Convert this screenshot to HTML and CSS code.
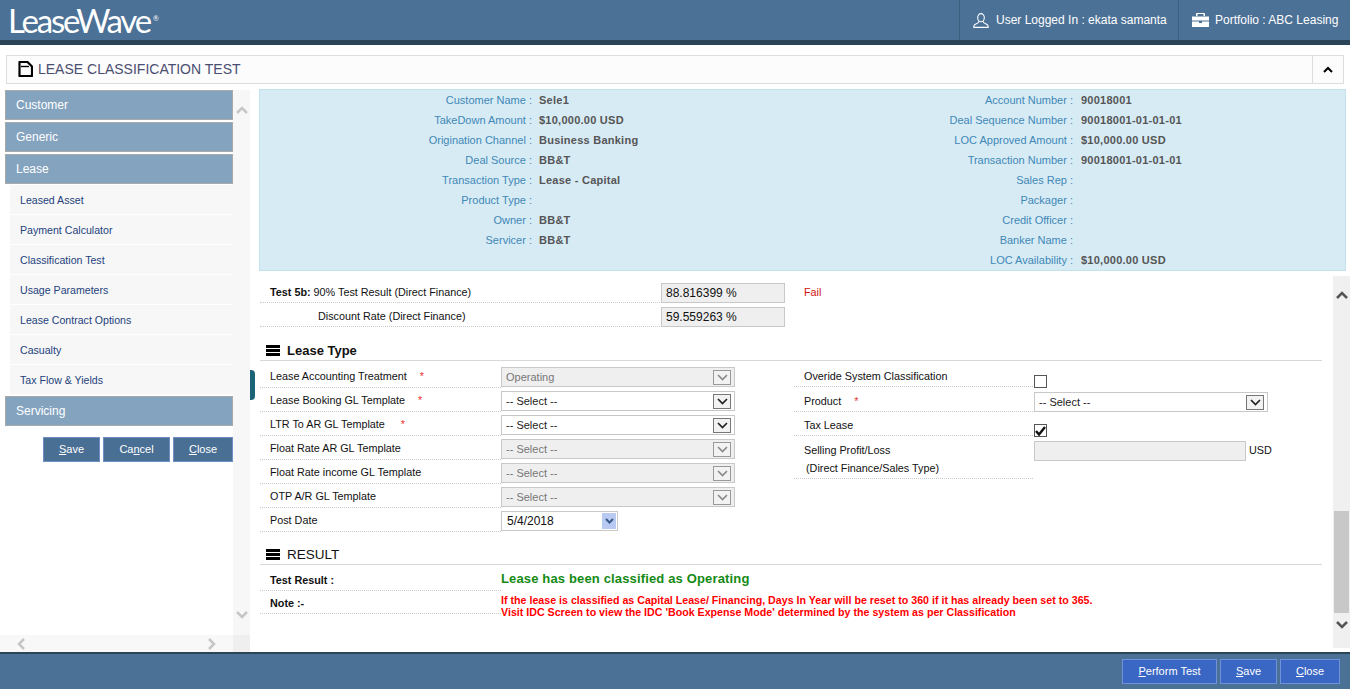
FILE: index.html
```html
<!DOCTYPE html>
<html lang="en">
<head>
    <meta charset="UTF-8">
    <title>Lease Classification Test</title>
    <link rel="stylesheet" href="styles.css">
</head>
<body>

    <header class="topbar">
        <div class="logo">LeaseWave<sup>®</sup></div>
        <div class="topbar-item topbar-user">
            <svg class="topbar-icon" width="16" height="15" viewBox="0 0 16 15" fill="none" stroke="#fff" stroke-width="1.1"><ellipse cx="8" cy="4.700" rx="3.300" ry="4.100"/><path d="M6 8.200 C5.800 10 4.500 10.300 2.800 11 C1.300 11.600 .6 12.800 .8 14.400 L15.200 14.400 C15.400 12.800 14.700 11.600 13.200 11 C11.500 10.300 10.200 10 10 8.200"/></svg>
            User Logged In : ekata samanta
        </div>
        <div class="topbar-item topbar-portfolio">
            <svg class="topbar-icon" width="17" height="14" viewBox="0 0 17 14" fill="#fff"><path d="M5.500 3V1h6v2h1.500V0.800C13 .3 12.700 0 12.200 0H4.800C4.300 0 4 .3 4 .8V3z"/><path d="M0 3.500h17V7.500H0z"/><path d="M0 8.500h7v1.500h3V8.500h7V14H0z"/></svg>
            Portfolio : ABC Leasing
        </div>
    </header>

    <div class="titlebar">
        <div class="titlebar-name">
            <svg width="15" height="16" viewBox="0 0 15 16" fill="none" stroke="#000" stroke-width="2.200"><path d="M1.500 1h8l4.500 4.500V15H1.500z" stroke-linejoin="round"/><path d="M3 5.500h8" stroke-width="1.400"/></svg>
            LEASE CLASSIFICATION TEST
        </div>
        <div class="titlebar-toggle">
            <svg width="10" height="7" viewBox="0 0 10 7" fill="none" stroke="#000" stroke-width="2"><path d="M1 6l4-4 4 4"/></svg>
        </div>
    </div>

    <div class="page">
        <aside class="sidebar">
            <div class="sidebar-top">
                <nav class="menu">
                    <div class="menu-head">Customer</div>
                    <div class="menu-head">Generic</div>
                    <div class="menu-head">Lease</div>
                    <ul class="submenu">
                        <li>Leased Asset</li>
                        <li>Payment Calculator</li>
                        <li>Classification Test</li>
                        <li>Usage Parameters</li>
                        <li>Lease Contract Options</li>
                        <li>Casualty</li>
                        <li>Tax Flow &amp; Yields</li>
                    </ul>
                    <div class="menu-head">Servicing</div>
                    <div class="menu-buttons">
                        <button class="btn btn-save"><u>S</u>ave</button>
                        <button class="btn btn-cancel">Ca<u>n</u>cel</button>
                        <button class="btn btn-close"><u>C</u>lose</button>
                    </div>
                </nav>
                <div class="side-scroll">
                    <svg width="12" height="8" viewBox="0 0 12 8" fill="none" stroke="#c6c6c6" stroke-width="2.500"><path d="M1 7l5-5 5 5"/></svg>
                    <svg width="12" height="8" viewBox="0 0 12 8" fill="none" stroke="#c6c6c6" stroke-width="2.500"><path d="M1 1l5 5 5-5"/></svg>
                </div>
            </div>
            <div class="sidebar-bottom">
                <div class="hscroll">
                    <svg width="8" height="12" viewBox="0 0 8 12" fill="none" stroke="#c6c6c6" stroke-width="2.500"><path d="M7 1L2 6l5 5"/></svg>
                    <svg width="8" height="12" viewBox="0 0 8 12" fill="none" stroke="#c6c6c6" stroke-width="2.500"><path d="M1 1l5 5-5 5"/></svg>
                </div>
                <div class="corner"></div>
            </div>
        </aside>

        <div class="collapse-tab"></div>

        <main class="main">
            <section class="info">
                <div class="info-col">
                    <div class="info-row"><span class="info-label">Customer Name :</span><span class="info-value">Sele1</span></div>
                    <div class="info-row"><span class="info-label">TakeDown Amount :</span><span class="info-value">$10,000.00 USD</span></div>
                    <div class="info-row"><span class="info-label">Origination Channel :</span><span class="info-value">Business Banking</span></div>
                    <div class="info-row"><span class="info-label">Deal Source :</span><span class="info-value">BB&amp;T</span></div>
                    <div class="info-row"><span class="info-label">Transaction Type :</span><span class="info-value">Lease - Capital</span></div>
                    <div class="info-row"><span class="info-label">Product Type :</span><span class="info-value"></span></div>
                    <div class="info-row"><span class="info-label">Owner :</span><span class="info-value">BB&amp;T</span></div>
                    <div class="info-row"><span class="info-label">Servicer :</span><span class="info-value">BB&amp;T</span></div>
                </div>
                <div class="info-col info-col-right">
                    <div class="info-row"><span class="info-label">Account Number :</span><span class="info-value">90018001</span></div>
                    <div class="info-row"><span class="info-label">Deal Sequence Number :</span><span class="info-value">90018001-01-01-01</span></div>
                    <div class="info-row"><span class="info-label">LOC Approved Amount :</span><span class="info-value">$10,000.00 USD</span></div>
                    <div class="info-row"><span class="info-label">Transaction Number :</span><span class="info-value">90018001-01-01-01</span></div>
                    <div class="info-row"><span class="info-label">Sales Rep :</span><span class="info-value"></span></div>
                    <div class="info-row"><span class="info-label">Packager :</span><span class="info-value"></span></div>
                    <div class="info-row"><span class="info-label">Credit Officer :</span><span class="info-value"></span></div>
                    <div class="info-row"><span class="info-label">Banker Name :</span><span class="info-value"></span></div>
                    <div class="info-row"><span class="info-label">LOC Availability :</span><span class="info-value">$10,000.00 USD</span></div>
                </div>
            </section>

            <div class="form-wrap">
                <div class="form">
                    <div class="test-row">
                        <div class="test-label"><b>Test 5b:</b> 90% Test Result (Direct Finance)</div>
                        <div class="readonly test-value">88.816399 %</div>
                        <div class="fail">Fail</div>
                    </div>
                    <div class="test-row">
                        <div class="test-label test-label-indent">Discount Rate (Direct Finance)</div>
                        <div class="readonly test-value">59.559263 %</div>
                    </div>

                    <h2 class="section-head section-lease">
                        <span class="bars"></span>Lease Type
                    </h2>

                    <div class="columns">
                        <div class="col-left">
                            <div class="field">
                                <div class="field-label">Lease Accounting Treatment<span class="req">*</span></div>
                                <div class="select disabled"><span>Operating</span><i class="arrow"><svg width="11" height="7" viewBox="0 0 11 7" fill="none" stroke="#8a8a8a" stroke-width="1.700"><path d="M1 1l4.500 4.500L10 1"/></svg></i></div>
                            </div>
                            <div class="field">
                                <div class="field-label">Lease Booking GL Template<span class="req">*</span></div>
                                <div class="select"><span>-- Select --</span><i class="arrow"><svg width="11" height="7" viewBox="0 0 11 7" fill="none" stroke="#222" stroke-width="1.700"><path d="M1 1l4.500 4.500L10 1"/></svg></i></div>
                            </div>
                            <div class="field">
                                <div class="field-label">LTR To AR GL Template<span class="req req-wide">*</span></div>
                                <div class="select"><span>-- Select --</span><i class="arrow"><svg width="11" height="7" viewBox="0 0 11 7" fill="none" stroke="#222" stroke-width="1.700"><path d="M1 1l4.500 4.500L10 1"/></svg></i></div>
                            </div>
                            <div class="field">
                                <div class="field-label">Float Rate AR GL Template</div>
                                <div class="select disabled"><span>-- Select --</span><i class="arrow"><svg width="11" height="7" viewBox="0 0 11 7" fill="none" stroke="#8a8a8a" stroke-width="1.700"><path d="M1 1l4.500 4.500L10 1"/></svg></i></div>
                            </div>
                            <div class="field">
                                <div class="field-label">Float Rate income GL Template</div>
                                <div class="select disabled"><span>-- Select --</span><i class="arrow"><svg width="11" height="7" viewBox="0 0 11 7" fill="none" stroke="#8a8a8a" stroke-width="1.700"><path d="M1 1l4.500 4.500L10 1"/></svg></i></div>
                            </div>
                            <div class="field">
                                <div class="field-label">OTP A/R GL Template</div>
                                <div class="select disabled"><span>-- Select --</span><i class="arrow"><svg width="11" height="7" viewBox="0 0 11 7" fill="none" stroke="#8a8a8a" stroke-width="1.700"><path d="M1 1l4.500 4.500L10 1"/></svg></i></div>
                            </div>
                            <div class="field">
                                <div class="field-label">Post Date</div>
                                <div class="date"><span>5/4/2018</span><i class="date-arrow"><svg width="9" height="6" viewBox="0 0 9 6" fill="none" stroke="#3a5a8c" stroke-width="2"><path d="M1 1l3.500 3.500L8 1"/></svg></i></div>
                            </div>
                        </div>

                        <div class="col-right">
                            <div class="rfield rfield-1">
                                <div class="rfield-label">Overide System Classification</div>
                                <div class="check"></div>
                            </div>
                            <div class="rfield rfield-2">
                                <div class="rfield-label">Product<span class="req">*</span></div>
                                <div class="select select-product"><span>-- Select --</span><i class="arrow"><svg width="11" height="7" viewBox="0 0 11 7" fill="none" stroke="#222" stroke-width="1.700"><path d="M1 1l4.500 4.500L10 1"/></svg></i></div>
                            </div>
                            <div class="rfield rfield-3">
                                <div class="rfield-label">Tax Lease</div>
                                <div class="check"><svg width="11" height="10" viewBox="0 0 11 10" fill="none" stroke="#111" stroke-width="2.400"><path d="M1 5l3 3.500L10 1"/></svg></div>
                            </div>
                            <div class="rfield rfield-4">
                                <div class="rfield-label">Selling Profit/Loss<span class="label-second">(Direct Finance/Sales Type)</span></div>
                                <div class="readonly profit"></div>
                                <span class="usd">USD</span>
                            </div>
                        </div>
                    </div>

                    <h2 class="section-head section-result">
                        <span class="bars"></span>RESULT
                    </h2>

                    <div class="result-row result-first">
                        <div class="field-label"><b>Test Result :</b></div>
                        <div class="result-green">Lease has been classified as Operating</div>
                    </div>
                    <div class="result-row result-second">
                        <div class="field-label"><b>Note :-</b></div>
                        <div class="result-red">If the lease is classified as Capital Lease/ Financing, Days In Year will be reset to 360 if it has already been set to 365.<br>Visit IDC Screen to view the IDC 'Book Expense Mode' determined by the system as per Classification</div>
                    </div>
                </div>

                <div class="main-scroll">
                    <svg width="12" height="8" viewBox="0 0 12 8" fill="none" stroke="#555" stroke-width="2.500"><path d="M1 7l5-5 5 5"/></svg>
                    <div class="thumb"></div>
                    <svg width="12" height="8" viewBox="0 0 12 8" fill="none" stroke="#555" stroke-width="2.500"><path d="M1 1l5 5 5-5"/></svg>
                </div>
            </div>
        </main>
    </div>

    <footer class="footer">
        <button class="btn btn-blue btn-perform"><u>P</u>erform Test</button>
        <button class="btn btn-blue btn-foot-save"><u>S</u>ave</button>
        <button class="btn btn-blue btn-foot-close"><u>C</u>lose</button>
    </footer>

</body>
</html>
```

FILE: styles.css
```css
* {
    box-sizing: border-box;
}
html, body {
    margin: 0;
    height: 689px;
    overflow: hidden;
}
body {
    font-family: "Liberation Sans", Arial, sans-serif;
    font-size: 11px;
    color: #222;
    background: #fff;
    display: flex;
    flex-direction: column;
}

/* top bar */
.topbar {
    height: 45px;
    flex: none;
    background: #4c7196;
    border-bottom: 5px solid #2c4458;
    display: flex;
    align-items: stretch;
    color: #fff;
    font-size: 12px;
}
.logo {
    font-family: Lato, "Open Sans", sans-serif;
    font-weight: 400;
    font-size: 33px;
    letter-spacing: -2.200px;
    line-height: 40px;
    padding-left: 8px;
    margin-right: auto;
}
.logo sup {
    font-size: 7px;
    letter-spacing: 0;
    vertical-align: 12px;
    line-height: 0;
    margin-left: 3px;
}
.topbar-item {
    display: flex;
    align-items: center;
    padding-left: 13px;
    border-left: 1px solid #3d5f80;
    white-space: nowrap;
}
.topbar-user {
    width: 219px;
    gap: 7px;
}
.topbar-portfolio {
    width: 172px;
    gap: 6px;
}

/* page title */
.titlebar {
    flex: none;
    height: 29px;
    margin: 10px 6px 6px;
    border: 1px solid #ddd;
    background: #fcfcfc;
    display: flex;
    align-items: center;
    justify-content: space-between;
}
.titlebar-name {
    display: flex;
    align-items: center;
    gap: 5px;
    padding: 0 0 2px 11px;
    font-size: 14px;
    color: #4a4e70;
}
.titlebar-toggle {
    width: 31px;
    height: 100%;
    border-left: 1px solid #ddd;
    display: flex;
    align-items: center;
    justify-content: center;
}

.page {
    flex: 1;
    min-height: 0;
    display: flex;
}

/* left menu */
.sidebar {
    width: 250px;
    flex: none;
    display: flex;
    flex-direction: column;
}
.sidebar-top {
    flex: 1;
    display: flex;
    min-height: 0;
}
.menu {
    width: 233px;
    padding-left: 5px;
}
.menu-head {
    height: 30px;
    margin-bottom: 2px;
    line-height: 28px;
    padding-left: 10px;
    background: #84a3bf;
    border: 1px solid #a9a9a9;
    color: #fff;
    font-size: 12px;
}
.submenu {
    list-style: none;
    margin: -1px 0 0;
    padding: 0;
}
.submenu li {
    height: 30px;
    margin-left: 5px;
    padding-left: 10px;
    line-height: 30px;
    background: #f7f7f7;
    border-bottom: 1px solid #fff;
    color: #24427c;
    font-size: 10.600px;
}
.submenu + .menu-head {
    margin-top: 1px;
}
.menu-buttons {
    display: flex;
    justify-content: flex-end;
    gap: 3px;
    margin-top: 11px;
}
.btn {
    height: 25px;
    padding: 0 0 1px;
    font-family: inherit;
    font-size: 11px;
    color: #fff;
    background: #4a6f94;
    border: 1px solid #6f8fc4;
}
.btn-save {
    width: 57px;
}
.btn-cancel {
    width: 67px;
}
.btn-close {
    width: 60px;
}
.side-scroll {
    width: 17px;
    background: #f7f7f7;
    display: flex;
    flex-direction: column;
    justify-content: space-between;
    align-items: center;
    padding: 16px 0 16px;
}
.sidebar-bottom {
    height: 17px;
    flex: none;
    display: flex;
}
.hscroll {
    width: 233px;
    background: #f8f8f8;
    display: flex;
    justify-content: space-between;
    align-items: center;
    padding: 0 17px;
}
.corner {
    width: 17px;
    background: #efefef;
}

.collapse-tab {
    width: 5px;
    height: 30px;
    flex: none;
    margin: 280px 4px 0 0;
    background: #1b6478;
    border-radius: 0 4px 4px 0;
}

/* customer summary */
.main {
    flex: 1;
    min-width: 0;
    display: flex;
    flex-direction: column;
}
.info {
    flex: none;
    width: 1087px;
    height: 182px;
    margin-top: -1px;
    background: #d7ebf5;
    border: 1px solid #c3e2ee;
    display: flex;
}
.info-col {
    width: 545px;
}
.info-col-right {
    width: auto;
}
.info-row {
    height: 20px;
    display: flex;
    align-items: center;
    font-size: 11px;
    white-space: nowrap;
}
.info-label {
    width: 272px;
    text-align: right;
    color: #3f88b5;
}
.info-value {
    margin-left: 7px;
    font-weight: bold;
    letter-spacing: .25px;
    color: #555;
}
.info-col-right .info-label {
    width: 268px;
}
.info-col-right .info-value {
    margin-left: 8px;
}

/* form area */
.form-wrap {
    flex: none;
    height: 372px;
    margin-top: 5px;
    display: flex;
}
.form {
    width: 1062px;
    margin-left: 1px;
    padding-top: 7px;
    font-size: 10.800px;
    color: #111;
}
.test-row {
    display: flex;
    height: 20px;
    margin-bottom: 4px;
}
.test-label {
    width: 400px;
    height: 20px;
    margin-right: 1px;
    padding-left: 10px;
    line-height: 18px;
    border-bottom: 1px dotted #ccc;
}
.test-label-indent {
    padding-left: 58px;
}
.readonly {
    background: #efefef;
    border: 1px solid #c8c8c8;
}
.test-value {
    width: 124px;
    padding-left: 4px;
    font-size: 12px;
    line-height: 18px;
}
.fail {
    margin-left: 19px;
    color: #d01010;
    line-height: 18px;
}
.section-head {
    display: flex;
    align-items: center;
    margin: 0;
    height: 21px;
    padding-left: 6px;
    border-bottom: 1px solid #d8d8d8;
    font-weight: normal;
    color: #111;
}
.section-lease {
    margin-top: 13px;
    font-size: 13px;
    font-weight: bold;
}
.section-result {
    margin-top: 12px;
    font-size: 13.500px;
}
.bars {
    width: 14px;
    height: 11px;
    margin-right: 7px;
    border-top: 3px solid #000;
    border-bottom: 3px solid #000;
    background: linear-gradient(#000, #000) center / 100% 3px no-repeat;
}
.columns {
    display: flex;
    margin-top: 3px;
}
.col-left {
    width: 534px;
}
.field {
    display: flex;
    height: 24px;
}
.field-label {
    width: 241px;
    height: 24px;
    flex: none;
    padding-left: 10px;
    line-height: 24px;
    border-bottom: 1px dotted #ccc;
}
.req {
    margin-left: 13px;
    color: #e83030;
}
.req-wide {
    margin-left: 16px;
}
.select {
    width: 234px;
    height: 20px;
    margin-top: 3px;
    padding: 0 3px 0 4px;
    display: flex;
    align-items: center;
    justify-content: space-between;
    border: 1px solid #c8c8c8;
    background: #fff;
    font-size: 11px;
    color: #222;
}
.select.disabled {
    background: #efefef;
    color: #777;
}
.arrow {
    width: 18px;
    height: 15px;
    border: 1px solid #777;
    background: #f2f2f2;
    display: flex;
    align-items: center;
    justify-content: center;
}
.disabled .arrow {
    border-color: #999;
}
.date {
    width: 117px;
    height: 20px;
    margin-top: 3px;
    padding-left: 5px;
    display: flex;
    align-items: center;
    justify-content: space-between;
    border: 1px solid #c8c8c8;
    font-size: 12px;
}
.date-arrow {
    width: 14px;
    height: 16px;
    margin-right: 1px;
    background: #b9caf2;
    display: flex;
    align-items: center;
    justify-content: center;
}
.rfield {
    display: flex;
}
.rfield-label {
    width: 239px;
    flex: none;
    margin-right: 1px;
    padding-left: 10px;
    border-bottom: 1px dotted #ccc;
    line-height: 24px;
}
.rfield-1 {
    height: 23px;
}
.rfield-1 .rfield-label {
    height: 23px;
}
.rfield-2 {
    height: 25px;
}
.rfield-2 .rfield-label {
    height: 25px;
    line-height: 28px;
}
.rfield-3 {
    height: 24px;
}
.rfield-3 .rfield-label {
    height: 24px;
    line-height: 26px;
}
.rfield-4 {
    height: 43px;
}
.rfield-4 .rfield-label {
    height: 43px;
    line-height: 18px;
    padding-top: 5px;
}
.label-second {
    display: block;
    padding-left: 2px;
}
.check {
    width: 13px;
    height: 13px;
    flex: none;
    margin-top: 11px;
    border: 1px solid #555;
    display: flex;
    align-items: center;
    justify-content: center;
}
.rfield-3 .check {
    margin-top: 12px;
}
.select-product {
    margin-top: 5px;
}
.profit {
    width: 212px;
    height: 20px;
    margin-top: 5px;
}
.usd {
    margin: 8px 0 0 3px;
}
.result-row {
    display: flex;
}
.result-first .field-label {
    height: 26px;
    line-height: 30px;
}
.result-second .field-label {
    height: 23px;
    line-height: 24px;
}
.result-green {
    margin-top: 6px;
    font-size: 13px;
    font-weight: bold;
    color: #158a15;
    letter-spacing: .15px;
}
.result-red {
    margin-top: 3px;
    font-size: 10.670px;
    font-weight: bold;
    line-height: 12px;
    color: #f00;
    white-space: nowrap;
}
.main-scroll {
    width: 17px;
    flex: none;
    margin-left: auto;
    background: #f0f0f0;
    display: flex;
    flex-direction: column;
    align-items: center;
    padding: 15px 0 19px;
}
.thumb {
    width: 15px;
    height: 102px;
    margin: auto 0 8px;
    background: #c8c8c8;
}

/* bottom bar */
.footer {
    flex: none;
    height: 37px;
    background: #4c7196;
    border-top: 2px solid #2c4458;
    display: flex;
    justify-content: flex-end;
    gap: 3px;
    padding: 5px 10px 0 0;
}
.btn-blue {
    background: #3a66c4;
    border-color: #6f92db;
}
.btn-perform {
    width: 95px;
}
.btn-foot-save {
    width: 57px;
}
.btn-foot-close {
    width: 60px;
}
```
